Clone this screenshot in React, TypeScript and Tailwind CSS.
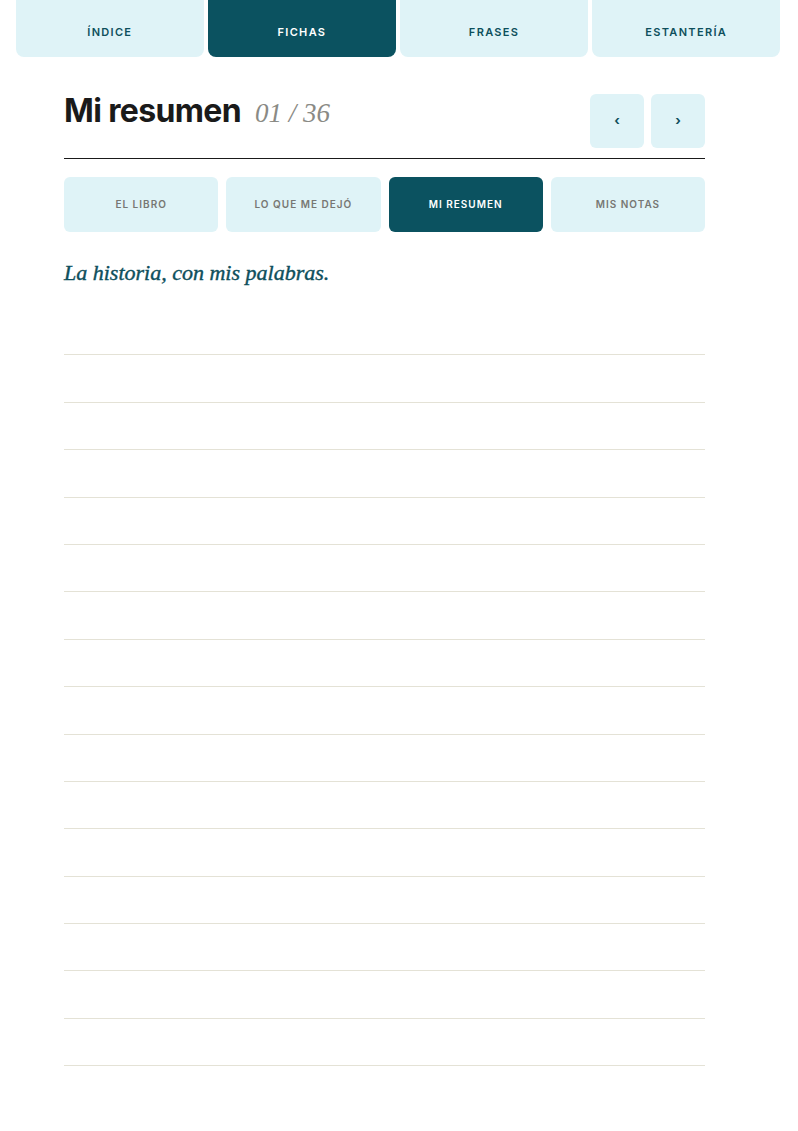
import React from "react"

const topTabs = ["ÍNDICE", "FICHAS", "FRASES", "ESTANTERÍA"]
const subTabs = ["EL LIBRO", "LO QUE ME DEJÓ", "MI RESUMEN", "MIS NOTAS"]

export default function App() {
  const lines = Array.from({ length: 16 })

  return (
    <div className="min-h-[1131px] bg-white font-['Inter',sans-serif]">
      {/* Section tabs */}
      <div className="ml-4 grid w-[764px] grid-cols-4 gap-[4.5px]">
        {topTabs.map((t) => (
          <div
            key={t}
            className={
              t === "FICHAS"
                ? "flex h-[57px] items-center justify-center rounded-b-lg bg-[#0b5260] pt-[7px] text-[11px] font-semibold tracking-[0.12em] text-white"
                : "flex h-[57px] items-center justify-center rounded-b-lg bg-[#dff3f7] pt-[7px] text-[11px] font-semibold tracking-[0.12em] text-[#0e4f5c]"
            }
          >
            {t}
          </div>
        ))}
      </div>

      <div className="ml-16 w-[641px]">
        {/* Header */}
        <div className="mt-[37px] flex items-start justify-between border-b-[1.5px] border-[#1a1a1a] pb-[10px]">
          <div className="flex items-baseline gap-[14px] pt-[1px]">
            <h1 className="text-[32px] font-bold leading-[32px] tracking-[-0.02em] text-[#1a1a1a]">Mi resumen</h1>
            <span className="font-['Liberation_Serif',serif] text-[27px] italic leading-none text-[#8a8a85]">01 / 36</span>
          </div>
          <div className="flex gap-[7px]">
            <button className="flex h-[54px] w-[54px] items-center justify-center rounded-md bg-[#dff3f7] text-[13px] font-bold text-[#0e4f5c]">
              ‹
            </button>
            <button className="flex h-[54px] w-[54px] items-center justify-center rounded-md bg-[#dff3f7] text-[13px] font-bold text-[#0e4f5c]">
              ›
            </button>
          </div>
        </div>

        {/* Sub tabs */}
        <div className="mt-[18px] grid grid-cols-4 gap-2">
          {subTabs.map((t) => (
            <div
              key={t}
              className={
                t === "MI RESUMEN"
                  ? "flex h-[55px] items-center justify-center rounded-md bg-[#0b5260] text-[10px] font-semibold tracking-[0.1em] text-white"
                  : "flex h-[55px] items-center justify-center rounded-md bg-[#dff3f7] text-[10px] font-semibold tracking-[0.1em] text-[#777773]"
              }
            >
              {t}
            </div>
          ))}
        </div>

        <p className="mt-[26px] font-['Liberation_Serif',serif] text-[22px] italic leading-[30px] text-[#0e4f5c] [-webkit-text-stroke:0.4px_#0e4f5c]">
          La historia, con mis palabras.
        </p>

        {/* Ruled lines */}
        <div className="mt-[20px]">
          {lines.map((_, i) => (
            <div key={i} className="h-[47.4px] border-b border-[#e4e2d6]" />
          ))}
        </div>
      </div>
    </div>
  )
}
